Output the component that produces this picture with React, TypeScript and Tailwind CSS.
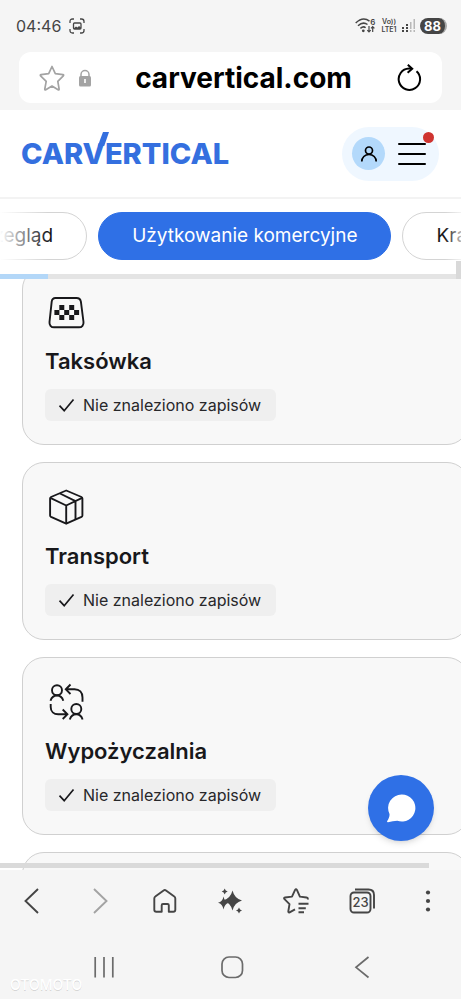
import type { ReactNode } from "react";

const tabs = ["Przegląd", "Użytkowanie komercyjne", "Kradzież"] as const;

const activeTab = "Użytkowanie komercyjne";

type Usage = {
  id: string;
  title: string;
  icon: ReactNode;
};

const usages: Usage[] = [
  { id: "taxi", title: "Taksówka", icon: <TaxiIcon /> },
  { id: "transport", title: "Transport", icon: <BoxIcon /> },
  { id: "rental", title: "Wypożyczalnia", icon: <RentalIcon /> },
  { id: "police", title: "Policja", icon: <BoxIcon /> },
];

function TaxiIcon() {
  return (
    <svg viewBox="0 0 44 44" className="size-11" fill="none" aria-hidden="true">
      <path
        d="M10.5 8h21c2.400 0 4 1.400 4.400 3.700l2.600 20.300c.3 3-1.500 5.300-4.500 5.300H9c-3 0-4.800-2.300-4.500-5.300L6.700 11.700C7 9.400 8.200 8 10.500 8Z"
        stroke="#18181b"
        strokeWidth="1.900"
      />
      <path
        d="M14.300 15h5v5h-5zM24.200 15h5v5h-5zM9.400 20h5v5h-5zM19.200 20h5v5h-5zM29.100 20h5v5h-5zM14.300 25h5v5h-5zM24.200 25h5v5h-5z"
        fill="#18181b"
      />
    </svg>
  );
}

function BoxIcon() {
  return (
    <svg
      viewBox="0 0 44 44"
      className="size-11"
      fill="none"
      stroke="#18181b"
      strokeWidth="1.900"
      strokeLinejoin="round"
      aria-hidden="true"
    >
      <path d="M21.200 5.500 36.500 12q.9.400.9 1.400v17q0 1-.9 1.500L21.200 38.700 6 31.900q-.9-.5-.9-1.500v-17q0-1 .9-1.400Z" />
      <path d="M5.300 12.800 21.200 20.500l16-7.700M21.200 20.500v18.200M15 8.500l15.500 7.700v18.300" />
    </svg>
  );
}

function RentalIcon() {
  return (
    <svg
      viewBox="0 0 44 44"
      className="size-11"
      fill="none"
      stroke="#18181b"
      strokeWidth="1.900"
      aria-hidden="true"
    >
      <circle cx="12" cy="10.300" r="5" />
      <path d="M5.500 20.800c1-3.300 3.400-5.300 6.500-5.300s5.300 2 6.300 5.300" />
      <circle cx="31.300" cy="29" r="5" />
      <path d="M24.800 39.500c1-3.300 3.400-5.300 6.500-5.300s5.300 2 6.300 5.300" />
      <path d="M37.500 21.800v-4.300c0-5-3-8.200-8-8.200h-8.300M25.500 4.500l-4.700 4.800 4.700 4.700" />
      <path d="M5.700 24v3c0 4.500 3 7.300 7.500 7.300h9M17.700 29.500l4.700 4.800-4.700 4.700" />
    </svg>
  );
}

function StatusBar() {
  return (
    <div className="flex h-[52px] items-center justify-between pr-3.5 pl-4 text-[#454545]">
      <div className="flex items-center gap-2">
        <span className="text-base">04:46</span>
        <svg viewBox="0 0 16 16" className="size-4" fill="none" aria-hidden="true">
          <path
            d="M1 5V3.500Q1 1 3.500 1H5M11 1h1.500Q15 1 15 3.500V5M15 11v1.500q0 2.500-2.500 2.500H11M5 15H3.500Q1 15 1 12.500V11"
            stroke="currentColor"
            strokeWidth="1.300"
          />
          <rect x="4.500" y="5" width="7.500" height="6" rx="1" stroke="currentColor" strokeWidth="1.300" />
          <path d="m4.500 10.500 2.500-2 1.500 1 1.500-1.500 2 1.500V11H5Z" fill="currentColor" />
        </svg>
      </div>
      <div className="flex items-center gap-1">
        <svg viewBox="0 0 21 16" className="h-4 w-[21px]" fill="none" aria-hidden="true">
          <g stroke="currentColor" strokeWidth="1.500">
            <path d="M.7 5Q8-2 14.500 3.200M3 7.700q5-4.500 9.500-1.200M5.400 10.300q3-2.500 5.200-.6" />
            <path d="M14 8v6M12.300 12.200 14 14l1.700-1.800M17.700 14V8.500M16 10.300l1.700-1.800 1.700 1.800" strokeWidth="1.200" />
          </g>
          <circle cx="8.300" cy="12.800" r="1.400" fill="currentColor" />
          <text x="15.300" y="7" fontSize="8" fontWeight="600" fill="currentColor">
            6
          </text>
        </svg>
        <div className="flex w-[18px] flex-col items-center text-[7px] leading-2 font-semibold">
          <span>Vo))</span>
          <span>LTE1</span>
        </div>
        <svg viewBox="0 0 14 14" className="size-3.5" aria-hidden="true">
          <path d="M0 8h2v2H0zM0 11h2v2H0zM4 5h2v2H4zM4 8h2v2H4zM4 11h2v2H4z" fill="#454545" />
          <path d="M8 3h1.500v7H8zM8 11h1.500v2H8zM11.500 0H13v10h-1.500zM11.500 11H13v2h-1.500z" fill="#b8b8b8" />
        </svg>
        <span className="h-4 w-[27px] rounded-full border-r-2 border-[#a8a8a8] bg-[#454545] text-center text-[13px] leading-4 font-bold text-white">
          88
        </span>
      </div>
    </div>
  );
}

function AddressBar() {
  return (
    <div className="mx-[19px] mb-[7px] flex h-[51px] items-center rounded-xl bg-white px-[19px]">
      <button type="button" aria-label="Dodaj do ulubionych">
        <svg viewBox="0 0 28 28" className="size-7" fill="none" aria-hidden="true">
          <path
            d="m14 2.500 3.300 7.200 7.600 1q1.300.2.400 1.200l-5.500 5.500 1.300 7.500q.2 1.300-1 .8L14 22l-6.200 3.700q-1.200.5-1-.8l1.400-7.500-5.600-5.500q-.8-1 .5-1.200l7.600-1Z"
            stroke="#a3a3a3"
            strokeWidth="1.700"
            strokeLinejoin="round"
          />
        </svg>
      </button>
      <svg viewBox="0 0 14 18" className="ml-3 h-[18px] w-3.5" fill="none" aria-hidden="true">
        <path d="M3 8V5.500a4 4 0 0 1 8 0V8" stroke="#a3a3a3" strokeWidth="1.500" />
        <rect x="1" y="7" width="12" height="10.500" rx="1.500" fill="#a3a3a3" />
        <path d="M7 10v4" stroke="white" strokeWidth="1.600" />
      </svg>
      <input
        type="text"
        aria-label="Adres strony"
        defaultValue="carvertical.com"
        className="min-w-0 flex-1 bg-transparent text-center text-[28px] leading-9 font-bold text-black outline-none"
      />
      <button type="button" aria-label="Odśwież">
        <svg viewBox="0 0 28 28" className="size-7" fill="none" stroke="black" strokeWidth="2" aria-hidden="true">
          <path d="M21.500 7.200A10.700 10.700 0 1 1 14 4.500h3" />
          <path d="m12.800.8 4.400 3.900-4.600 4" />
        </svg>
      </button>
    </div>
  );
}

function SiteHeader() {
  return (
    <header className="flex h-[89px] items-center justify-between border-b-2 border-[#f3f3f3] pr-[22px] pl-[21px]">
      <a href="#" className="text-[29px] leading-8 font-extrabold text-[#346fdf]">
        CAR
        <span className="relative">
          V
          <svg viewBox="0 0 12 14" className="absolute -top-1 -right-1 h-3.5 w-3" aria-hidden="true">
            <path d="M6 0H12L7.200 14H.8Z" fill="currentColor" />
          </svg>
        </span>
        ERTICAL
      </a>
      <div className="flex h-[54px] items-center gap-[13px] rounded-full bg-[#eff7ff] pr-[13px] pl-2.5">
        <button
          type="button"
          aria-label="Konto"
          className="flex size-[33px] items-center justify-center rounded-full bg-[#b3d9fb]"
        >
          <svg viewBox="0 0 18 18" className="size-[18px]" fill="none" stroke="black" strokeWidth="1.700" aria-hidden="true">
            <circle cx="9" cy="5.500" r="3.500" />
            <path d="M1.800 16.500c0-4 3-7 7.200-7s7.200 3 7.200 7" />
          </svg>
        </button>
        <button type="button" aria-label="Menu" className="relative flex w-7 flex-col gap-2">
          <span className="h-0.5 rounded bg-black" />
          <span className="h-0.5 rounded bg-black" />
          <span className="h-0.5 rounded bg-black" />
          <span className="absolute -top-[11px] -right-2 size-[11px] rounded-full bg-[#cf3430]" />
        </button>
      </div>
    </header>
  );
}

function TabBar() {
  return (
    <nav className="relative overflow-hidden pt-[13px]">
      <div className="relative">
        <div className="-ml-[60px] flex gap-[11px]">
          {tabs.map((tab) => (
            <button
              key={tab}
              type="button"
              className={`h-12 shrink-0 rounded-full border px-[33px] text-[19px] whitespace-nowrap ${
                tab === activeTab
                  ? "border-[#2f70e6] bg-[#2f70e6] text-white"
                  : "border-[#d4d4d4] bg-white text-zinc-900"
              }`}
            >
              {tab}
            </button>
          ))}
        </div>
        <div className="absolute inset-y-0 left-0 w-12 bg-linear-to-r from-white to-transparent" />
        <div className="absolute inset-y-0 right-0 w-4 bg-linear-to-l from-white/70 to-transparent" />
      </div>
      <div className="mt-3.5 h-[5px] bg-[#e4e4e4]">
        <div className="h-full w-12 bg-[#b3d7f8]" />
      </div>
      <div className="absolute right-0 bottom-0 h-[18px] w-[5px] bg-[#d9d9d9]" />
    </nav>
  );
}

function UsageCard({ title, icon }: { title: string; icon: ReactNode }) {
  return (
    <li className="rounded-[22px] border border-[#d0d0d0] bg-[#f8f8f8] px-[22px] pt-[22px] pb-[23px]">
      {icon}
      <h2 className="mt-[11px] text-[22px] leading-8 font-semibold text-zinc-900">{title}</h2>
      <p className="mt-3 flex h-8 w-fit items-center gap-2 rounded-md bg-[#efefef] pr-[15px] pl-[13px] text-base text-zinc-800">
        <svg viewBox="0 0 17 16" className="h-4 w-[17px]" fill="none" aria-hidden="true">
          <path d="m1.500 8.700 4.700 5L15.500 2.500" stroke="#18181b" strokeWidth="1.700" />
        </svg>
        Nie znaleziono zapisów
      </p>
    </li>
  );
}

function BrowserToolbar() {
  return (
    <div className="grid h-[62px] grid-cols-7 items-center justify-items-center text-[#454545]">
      <button type="button" aria-label="Wstecz">
        <svg viewBox="0 0 28 28" className="size-7" fill="none" stroke="currentColor" strokeWidth="1.900" aria-hidden="true">
          <path d="M19 2 6.500 14 19 26" />
        </svg>
      </button>
      <button type="button" aria-label="Dalej">
        <svg viewBox="0 0 28 28" className="size-7" fill="none" stroke="#a3a3a3" strokeWidth="1.900" aria-hidden="true">
          <path d="M9 2l12.500 12L9 26" />
        </svg>
      </button>
      <button type="button" aria-label="Strona główna">
        <svg viewBox="0 0 28 28" className="size-7" fill="none" stroke="currentColor" strokeWidth="1.900" strokeLinejoin="round" aria-hidden="true">
          <path d="M3.300 11.500q0-1.300 1-2l8.300-6.100q1.200-.9 2.400 0l8.300 6.100q1 .7 1 2v11.300q0 2-2 2h-4.500v-6.500q0-1.300-1.300-1.300H12q-1.300 0-1.300 1.300v6.500H5.300q-2 0-2-2Z" />
        </svg>
      </button>
      <button type="button" aria-label="Asystent">
        <svg viewBox="0 0 28 28" className="size-7" fill="currentColor" aria-hidden="true">
          <path d="M16.500 3.500q2 8 9.500 10-7.500 2-9.500 10-2-8-9.500-10 7.500-2 9.500-10Z" />
          <path d="M7.500 9.500q1 5.500 5.500 6.300-4.500 1-5.500 6.700-1-5.700-5.500-6.700 4.500-.8 5.500-6.300Z" />
          <path d="M8.700 1.500q.6 2.400 3 3-2.400.6-3 3-.6-2.400-3-3 2.400-.6 3-3ZM23 20.500q.6 2.400 3 3-2.400.6-3 3-.6-2.400-3-3 2.400-.6 3-3Z" />
        </svg>
      </button>
      <button type="button" aria-label="Zakładki">
        <svg viewBox="0 0 28 28" className="size-7" fill="none" stroke="currentColor" strokeWidth="1.900" strokeLinejoin="round" aria-hidden="true">
          <path d="M25.500 12.500q1-1.700-1-2l-6.600-.9-3-6.700q-.9-1.600-1.800 0L10 9.600l-7 .9q-1.600.3-.5 1.600l5 5-1.200 7.200q-.1 1.600 1.300 1l5.400-3" />
          <path d="M16.500 16.700h10M16.500 21.200h7.300M16.500 25.300h5.500" />
        </svg>
      </button>
      <button type="button" aria-label="Karty">
        <svg viewBox="0 0 28 28" className="size-7" fill="none" stroke="currentColor" strokeWidth="1.900" aria-hidden="true">
          <rect x="2.500" y="5.500" width="20" height="20" rx="3.500" />
          <path d="M7 2.500h13.500q5.500 0 5.500 5.500v13.500" />
          <text x="12.500" y="20" textAnchor="middle" fontSize="13" fontWeight="500" fill="currentColor" stroke="none">
            23
          </text>
        </svg>
      </button>
      <button type="button" aria-label="Więcej">
        <svg viewBox="0 0 28 28" className="size-7" fill="currentColor" aria-hidden="true">
          <circle cx="14" cy="5.500" r="2.100" />
          <circle cx="14" cy="14" r="2.100" />
          <circle cx="14" cy="22.500" r="2.100" />
        </svg>
      </button>
    </div>
  );
}

function SystemNav() {
  return (
    <div className="relative grid h-[67px] grid-cols-3 items-center justify-items-center pt-0.5 pr-9 pl-10 text-[#6b6b6b]">
      <button type="button" aria-label="Ostatnie">
        <svg viewBox="0 0 24 24" className="size-6" fill="none" stroke="currentColor" strokeWidth="1.700" aria-hidden="true">
          <path d="M3.200 2v20.500M12 2v20.500M20.800 2v20.500" />
        </svg>
      </button>
      <button type="button" aria-label="Ekran główny">
        <svg viewBox="0 0 24 24" className="size-6" fill="none" stroke="currentColor" strokeWidth="1.700" aria-hidden="true">
          <rect x="2" y="2" width="20.500" height="20.500" rx="7" />
        </svg>
      </button>
      <button type="button" aria-label="Cofnij">
        <svg viewBox="0 0 24 24" className="size-6" fill="none" stroke="currentColor" strokeWidth="1.700" aria-hidden="true">
          <path d="M19.500 2 7 12.300l12.500 10.200" />
        </svg>
      </button>
      <span className="absolute bottom-1.5 left-2.5 text-sm leading-4 font-medium text-white text-shadow-2xs">
        OTOMOTO
      </span>
    </div>
  );
}

export default function App() {
  return (
    <div className="flex h-screen flex-col overflow-hidden bg-white font-['Inter','Liberation_Sans',sans-serif]">
      <div className="bg-[#f5f5f5]">
        <StatusBar />
        <AddressBar />
      </div>
      <SiteHeader />
      <TabBar />

      <main className="relative min-h-0 flex-1 overflow-hidden">
        <ul className="-mt-3 -mr-2 ml-[22px] flex flex-col gap-[17px]">
          {usages.map((usage) => (
            <UsageCard key={usage.id} title={usage.title} icon={usage.icon} />
          ))}
        </ul>

        <button
          type="button"
          aria-label="Czat"
          className="absolute right-[27px] bottom-[29px] flex size-[66px] items-center justify-center rounded-full bg-[#2f70e6] shadow-md"
        >
          <svg viewBox="0 0 30 30" className="size-[30px]" fill="white" aria-hidden="true">
            <path d="M15.800 1.500a13.500 13.500 0 1 1-4.500 26.200c-3 .3-6 .8-9.300 1.500-.8.100-1.200-.4-.8-1.200 1.600-2.600 2.500-4.600 2.300-7A13.500 13.500 0 0 1 15.800 1.500Z" />
          </svg>
        </button>
        <div className="absolute bottom-0.5 left-0 h-[5px] w-[93%] bg-[#dadada]" />
      </main>

      <div className="bg-[#f5f5f5]">
        <BrowserToolbar />
        <SystemNav />
      </div>
    </div>
  );
}
